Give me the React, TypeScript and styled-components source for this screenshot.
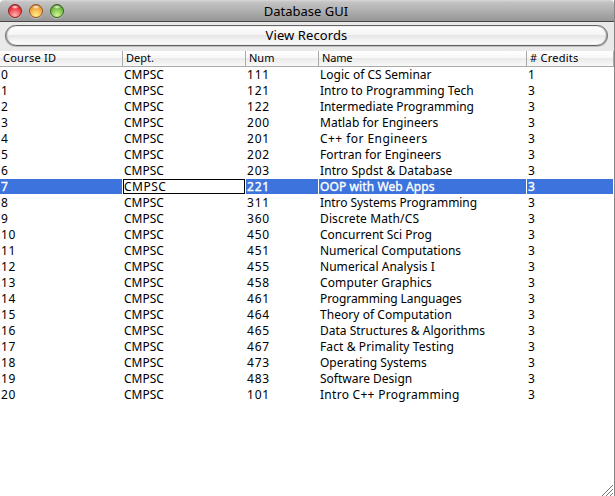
import React from 'react';
import styled, { createGlobalStyle } from 'styled-components';

const GlobalStyle = createGlobalStyle`
  * { box-sizing: border-box; }
  html, body { margin: 0; background: #fff; overflow: hidden; }
`;

const Window = styled.main`
  position: relative;
  display: flex;
  flex-direction: column;
  width: 615px;
  height: 496px;
  background: #fff;
  border-right: 1px solid #858585;
  font-family: 'Noto Sans', sans-serif;
  font-size: 12px;
  color: #000;
  white-space: pre;
`;

const TitleBar = styled.header`
  position: relative;
  display: flex;
  align-items: center;
  justify-content: center;
  flex: none;
  height: 22px;
  padding-right: 2px;
  border-bottom: 1px solid #484848;
  border-radius: 4px 4px 0 0;
  background: linear-gradient(#d8d8d8 0, #c4c4c4 2px, #969696 100%);
`;

const Title = styled.h1`
  margin: 0;
  font-size: 13px;
  font-weight: 400;
  line-height: 20px;
`;

const Lights = styled.div`
  position: absolute;
  left: 8px;
  top: 4px;
  display: flex;
  gap: 7px;
`;

const Light = styled.i<{ $edge: string; $mid: string; $low: string }>`
  display: block;
  width: 14px;
  height: 14px;
  border-radius: 50%;
  border: 1px solid ${p => p.$edge};
  background:
    radial-gradient(ellipse 4px 2px at 50% 2px, #fffffff0, #ffffff00),
    radial-gradient(circle at 50% 85%, ${p => p.$low} 0, ${p => p.$mid} 65%, ${p => p.$edge} 100%);
  box-shadow: 0 1px 0 #cfcfcf99;
`;

const Toolbar = styled.div`
  flex: none;
  height: 29px;
  padding: 3px 5px 5px;
  background: #e9e9e9;
`;

const Button = styled.button`
  display: flex;
  align-items: center;
  justify-content: center;
  width: 603px;
  height: 21px;
  padding: 0;
  border: 1px solid #666;
  border-radius: 11px;
  background: linear-gradient(#fff 0, #f5f5f5 45%, #e6e6e6 50%, #fff 100%);
  box-shadow: inset 1px 0 1px #999, inset -1px 0 1px #999, 0 1px 0 #bdbdbd;
  font: 13px/19px 'Noto Sans', sans-serif;
  letter-spacing: 0.1px;
  color: #000;
`;

const Columns = styled.div`
  display: grid;
  grid-template-columns: 123px 123px 73px 208px 87px;
`;

const TableHead = styled(Columns)`
  flex: none;
  height: 16px;
  border-bottom: 1px solid #aaa;
  background: linear-gradient(#fff 0, #f8f8f8 45%, #eaeaea 50%, #f9f9f9 100%);
`;

const HeadCell = styled.div<{ $spacing: number }>`
  padding-left: 3px;
  border-right: 1px solid #aaa;
  font-size: 11px;
  line-height: 14px;
  letter-spacing: ${p => p.$spacing}px;
`;

const Row = styled(Columns)<{ $selected: boolean }>`
  height: 16px;
  color: ${p => (p.$selected ? '#fff' : '#000')};
  -webkit-text-stroke: ${p => (p.$selected ? '0.35px #fff' : '0')};
  --fill: ${p => (p.$selected ? '#3d73dc' : '#fff')};
`;

const Cell = styled.div<{ $spacing?: number; $focused?: boolean }>`
  height: 15px;
  margin-right: 1px;
  padding-left: 1px;
  line-height: 15px;
  letter-spacing: ${p => p.$spacing ?? 0}px;
  background: var(--fill);
  ${p => p.$focused && `
    padding-left: 0;
    border: 1px solid #000;
    line-height: 13px;
    letter-spacing: 0.5px;
    background: #fff;
    color: #000;
    -webkit-text-stroke: 0;
  `}
`;

const Grip = styled.svg`
  position: absolute;
  right: 1px;
  bottom: 0;
`;

const headings: [string, number][] = [
  ['Course ID', 0.25], ['Dept.', 0], ['Num', 0], ['Name', -0.2], ['# Credits', 0.25],
];

const courses: [string, string, number][] = [
  ['111', 'Logic of CS Seminar', 0],
  ['121', 'Intro to Programming Tech', 0.03],
  ['122', 'Intermediate Programming', -0.06],
  ['200', 'Matlab for Engineers', 0.02],
  ['201', 'C++ for Engineers', 0.44],
  ['202', 'Fortran for Engineers', 0.04],
  ['203', 'Intro Spdst & Database', 0.08],
  ['221', 'OOP with Web Apps', 0.1],
  ['311', 'Intro Systems Programming', -0.08],
  ['360', 'Discrete Math/CS', 0.13],
  ['450', 'Concurrent Sci Prog', 0],
  ['451', 'Numerical Computations', 0],
  ['455', 'Numerical Analysis I', 0.04],
  ['458', 'Computer Graphics', 0.14],
  ['461', 'Programming Languages', -0.08],
  ['464', 'Theory of Computation', 0.05],
  ['465', 'Data Structures & Algorithms', 0],
  ['467', 'Fact & Primality Testing', 0.1],
  ['473', 'Operating Systems', 0],
  ['483', 'Software Design', 0],
  ['101', 'Intro C++ Programming', 0.28],
];

export default function App() {
  return (
    <>
      <GlobalStyle />
      <Window>
        <TitleBar>
          <Lights>
            <Light $edge="#8c2024" $mid="#ed3439" $low="#ffb5b0" />
            <Light $edge="#9b5620" $mid="#f2a33c" $low="#fff18c" />
            <Light $edge="#38651f" $mid="#70b83e" $low="#d2f69a" />
          </Lights>
          <Title>Database GUI</Title>
        </TitleBar>
        <Toolbar><Button>View Records</Button></Toolbar>
        <TableHead>
          {headings.map(([text, spacing]) => (
            <HeadCell key={text} $spacing={spacing}>{text}</HeadCell>
          ))}
        </TableHead>
        {courses.map(([num, name, spacing], i) => (
          <Row key={num} $selected={i === 7}>
            <Cell $spacing={0.6}>{i}</Cell>
            <Cell $focused={i === 7}>CMPSC</Cell>
            <Cell $spacing={0.8}>{num}</Cell>
            <Cell $spacing={spacing}>{name}</Cell>
            <Cell>{i === 0 ? 1 : 3}</Cell>
          </Row>
        ))}
        <Grip width="12" height="12" viewBox="0 0 12 12" stroke="#777" fill="none">
          <path d="M1 12 12 1M5 12 12 5M9 12 12 9" />
        </Grip>
      </Window>
    </>
  );
}
